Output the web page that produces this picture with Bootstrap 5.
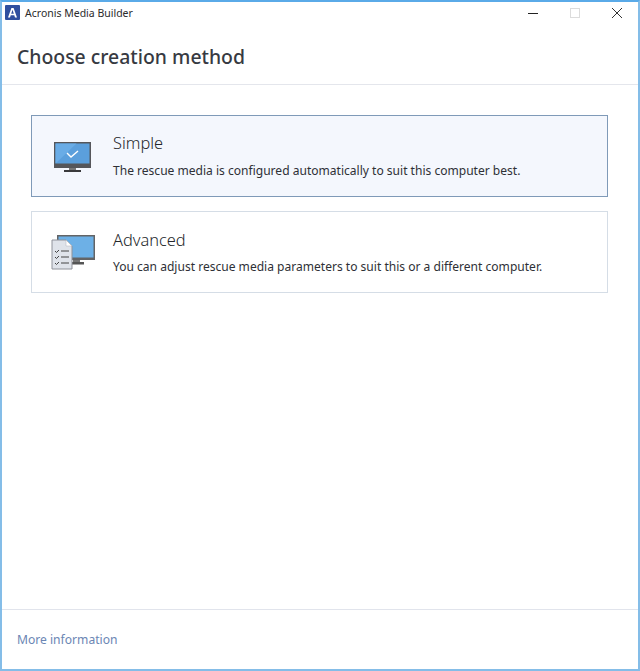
<!doctype html>
<html lang="en">
<head>
<meta charset="utf-8">
<title>Acronis Media Builder</title>
<link href="https://cdn.jsdelivr.net/npm/bootstrap@5.3.0/dist/css/bootstrap.min.css" rel="stylesheet">
<style>
html,body{height:100%;margin:0;background:#fff}
body{font-family:"Noto Sans","Open Sans",sans-serif;color:#33363d}
.app-win{height:671px;width:640px;border:solid #84bde8;border-width:2px;border-top-color:#5aaae8;background:#fff;overflow:hidden}
.title-bar{height:22px;padding-left:3px;font-size:10.5px;color:#2b2b2b}
.title-text{position:relative;top:1px}
.app-logo{width:15px;height:15px;margin-right:5px;margin-bottom:2px}
.win-btn{width:42px;height:22px}
.head-area{height:61px;padding-left:15px;border-bottom:1px solid #e4e6ec}
.head-area h1{font-size:19.4px;font-weight:500;margin:0;color:#373a42;position:relative;top:3px}
.method-list{padding:30px 30px 0 29px;gap:14px}
.method-card{height:82px;border:1px solid #d5dde6;background:#fff}
.method-card.is-active{border-color:#7f9ab8;background:#f4f7fd}
.icon-cell{width:81px;padding-left:19px}
.icon-cell svg{display:block}
.m-title{font-size:16.4px;line-height:20px;color:#25272c;font-weight:300}
.m-desc{font-size:12.05px;line-height:16px;color:#2e3036;margin-top:9px}
.is-active .m-title{position:relative;top:-1px}
.foot-area{height:60px;padding-left:15px;border-top:1px solid #e1e4ec;font-size:12.1px}
.foot-area a{color:#6b86b4;text-decoration:none;position:relative;top:1px}
</style>
</head>
<body>
<div class="app-win d-flex flex-column">
  <div class="title-bar d-flex align-items-center">
    <svg class="app-logo" viewBox="0 0 15 15"><rect width="15" height="15" rx="1" fill="#2f4f9f"/><path d="M3 12.5 6.4 3h2.2L12 12.5h-2l-.7-2.2H5.7L5 12.5zM6.2 8.7h2.6L7.5 4.8z" fill="#fff"/></svg>
    <span class="title-text">Acronis Media Builder</span>
    <div class="ms-auto d-flex">
      <div class="win-btn d-flex align-items-center justify-content-center"><svg width="12" height="12" viewBox="0 0 12 12"><path d="M1 6.5h10" stroke="#222" stroke-width="1"/></svg></div>
      <div class="win-btn d-flex align-items-center justify-content-center"><svg width="12" height="12" viewBox="0 0 12 12"><rect x="1.5" y="1.5" width="9" height="9" fill="none" stroke="#dcdcdc"/></svg></div>
      <div class="win-btn d-flex align-items-center justify-content-center"><svg width="12" height="12" viewBox="0 0 12 12"><path d="M1 1l10 10M11 1 1 11" stroke="#333" stroke-width="1"/></svg></div>
    </div>
  </div>
  <div class="head-area d-flex align-items-center"><h1>Choose creation method</h1></div>
  <div class="method-list d-flex flex-column flex-grow-1">
    <div class="method-card is-active d-flex align-items-center">
      <div class="icon-cell flex-shrink-0">
        <svg width="40" height="34" viewBox="0 0 40 34"><g transform="translate(3 3)"><rect x="0" y="0" width="37" height="26" fill="#55565a"/><rect x="1.5" y="1.5" width="34" height="20" fill="#5b9fdc"/><path d="M1.5 1.5h21l-21 20z" fill="#69ace6"/><path d="M13 11l4 4 7-6" fill="none" stroke="#fff" stroke-width="1.4"/><rect x="15" y="26" width="7" height="2" fill="#777"/><rect x="10" y="28" width="17" height="2" fill="#3a3a3c"/></g></svg>
      </div>
      <div>
        <div class="m-title">Simple</div>
        <div class="m-desc">The rescue media is configured automatically to suit this computer best.</div>
      </div>
    </div>
    <div class="method-card d-flex align-items-center">
      <div class="icon-cell flex-shrink-0">
        <svg width="46" height="38" viewBox="0 0 46 38"><g transform="translate(0 2)"><rect x="6" y="0" width="38" height="25" fill="#636466"/><rect x="7.5" y="1.5" width="35" height="21" fill="#6db0e6"/><rect x="22" y="25" width="7" height="3" fill="#777"/><rect x="20" y="27" width="13" height="2.5" fill="#555"/><path d="M1 5h14l6 6v23H1z" fill="#dfe3ea" stroke="#8f929a"/><path d="M15 5v6h6z" fill="#fff" stroke="#b0b3ba" stroke-width=".5"/><path d="M4 16l1.5 1.5L8 15M4 22l1.5 1.5L8 21M4 28l1.5 1.5L8 27M10 16h8M10 22h8M10 28h8" fill="none" stroke="#444" stroke-width="1"/></g></svg>
      </div>
      <div>
        <div class="m-title">Advanced</div>
        <div class="m-desc">You can adjust rescue media parameters to suit this or a different computer.</div>
      </div>
    </div>
  </div>
  <div class="foot-area d-flex align-items-center"><a href="#">More information</a></div>
</div>
</body>
</html>
